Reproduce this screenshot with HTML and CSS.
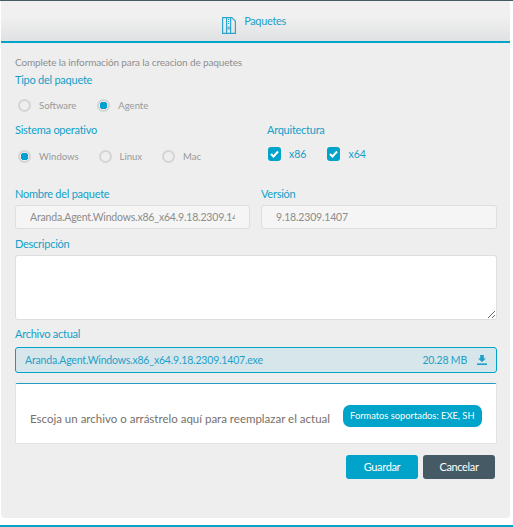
FILE: index.html
```html
<!DOCTYPE html>
<html lang="en">
<head>
  <meta charset="UTF-8" />
  <title>Paquetes</title>
  <link rel="stylesheet" href="styles.css">
</head>
<body>
  <div class="modal">
    <div class="modal-header">
      <svg class="header-icon" width="14" height="17" viewBox="0 0 14 17" fill="none" stroke="#2fa4cf" stroke-width="1.2">
        <path d="M.6.6h9.2l3.6 3.6v12.2H.6z"/>
        <path d="M4.6.6v15.8M8.6.6v15.8"/>
        <rect x="5.2" y="9.5" width="2.8" height="3.2" fill="#8fb8cc" stroke="none"/>
        <path d="M6.6 2v6" stroke-dasharray="1 1"/>
      </svg>
      <span>Paquetes</span>
    </div>

    <div class="modal-body">
      <p class="intro">Complete la información para la creacion de paquetes</p>
      <label class="field-label">Tipo del paquete</label>
      <div class="options type-options">
        <label class="radio"><span class="dot"></span>Software</label>
        <label class="radio"><span class="dot on"></span>Agente</label>
      </div>

      <div class="row-system">
        <div>
          <label class="field-label">Sistema operativo</label>
          <div class="options os-options">
            <label class="radio"><span class="dot on"></span>Windows</label>
            <label class="radio"><span class="dot"></span>Linux</label>
            <label class="radio"><span class="dot"></span>Mac</label>
          </div>
        </div>
        <div>
          <label class="field-label">Arquitectura</label>
          <div class="checks">
            <label class="check">
              <span class="box"><svg width="9" height="8" viewBox="0 0 9 8" fill="none" stroke="#fff" stroke-width="2"><path d="M1 4l2.5 2.5L8 1.5"/></svg></span>x86
            </label>
            <label class="check">
              <span class="box"><svg width="9" height="8" viewBox="0 0 9 8" fill="none" stroke="#fff" stroke-width="2"><path d="M1 4l2.5 2.5L8 1.5"/></svg></span>x64
            </label>
          </div>
        </div>
      </div>

      <div class="row-name">
        <div>
          <label class="field-label">Nombre del paquete</label>
          <input class="text-input" type="text" readonly value="Aranda.Agent.Windows.x86_x64.9.18.2309.1407" />
        </div>
        <div>
          <label class="field-label">Versión</label>
          <input class="text-input" type="text" readonly value="9.18.2309.1407" />
        </div>
      </div>

      <label class="field-label desc-label">Descripción</label>
      <textarea class="desc"></textarea>

      <label class="field-label file-label">Archivo actual</label>
      <div class="file-box">
        <span class="file-name">Aranda.Agent.Windows.x86_x64.9.18.2309.1407.exe</span>
        <span class="file-size">20.28 MB</span>
        <svg width="10" height="10" viewBox="0 0 10 10" fill="#1f9fc8">
          <path d="M3.2 0h3.6v3.4H9L5 7 1 3.4h2.2z"/>
          <rect x="0" y="8.4" width="10" height="1.6"/>
        </svg>
      </div>

      <div class="drop-box">
        <span>Escoja un archivo o arrástrelo aquí para reemplazar el actual</span>
        <span class="pill">Formatos soportados: EXE, SH</span>
      </div>

      <div class="actions">
        <button class="btn btn-save" type="button">Guardar</button>
        <button class="btn btn-cancel" type="button">Cancelar</button>
      </div>
    </div>
  </div>
  <div class="bottom-line"></div>
</body>
</html>
```

FILE: styles.css
```css
* {
  box-sizing: border-box;
}
html, body {
  height: 100%;
}
body {
  margin: 0;
  background: #fff;
  font-family: Lato, "Liberation Sans", sans-serif;
  font-size: 11px;
  color: #8c8c8c;
  border-top: 1px solid #455a64;
  display: flex;
  flex-direction: column;
  overflow: hidden;
}
.modal {
  width: 509px;
  margin-left: 1px;
  height: 517px;
  background: #eeeeee;
  border-radius: 0 0 4px 4px;
}
.modal-header {
  height: 42px;
  display: flex;
  align-items: center;
  justify-content: center;
  gap: 8px;
  padding-top: 2px;
  padding-right: 3px;
  background: linear-gradient(#f0f0f0 40%, #e0e1e3);
  border-bottom: 2px solid #00a3c9;
  color: #1f9fc8;
  font-size: 11px;
  letter-spacing: -0.35px;
}
.header-icon {
  margin-top: 7px;
}
.header-icon + span {
  margin-bottom: 3px;
}
.modal-body {
  padding: 13px 14px 0;
}
.intro {
  margin: 0;
  font-size: 10px;
  letter-spacing: -0.14px;
  line-height: 13px;
  color: #8f8f8f;
}
.field-label {
  display: block;
  color: #12a0c8;
  font-size: 11px;
  letter-spacing: -0.25px;
  line-height: 14px;
}
.intro + .field-label {
  margin-top: 4px;
}
.options {
  display: flex;
  align-items: center;
  height: 14px;
}
.type-options {
  margin-top: 11px;
  gap: 18px;
}
.os-options {
  margin-top: 12px;
  gap: 20px;
}
.radio {
  display: flex;
  align-items: center;
  gap: 8px;
  padding-left: 3px;
  font-size: 9.5px;
  color: #999;
}
.os-options .radio + .radio {
  padding-left: 0;
}
.dot {
  width: 13px;
  height: 13px;
  border: 2px solid #d4d4d4;
  border-radius: 50%;
}
.dot.on {
  background: radial-gradient(circle, #00a0d0 0 3.6px, transparent 4px);
}
.row-system {
  display: grid;
  grid-template-columns: 252px 1fr;
  margin-top: 11px;
  height: 64px;
}
.checks {
  display: flex;
  gap: 21px;
  margin-top: 10px;
  padding-left: 1px;
}
.check {
  display: flex;
  align-items: center;
  gap: 8px;
  color: #12a0c8;
  font-size: 10.5px;
}
.box {
  width: 13px;
  height: 14px;
  border-radius: 3px;
  background: #00a3c9;
  display: flex;
  align-items: center;
  justify-content: center;
}
.row-name {
  display: grid;
  grid-template-columns: 235px 236px;
  gap: 11px;
  width: 482px;
}
.row-name .field-label {
  margin-bottom: 4px;
}
.text-input {
  display: block;
  width: 100%;
  height: 24px;
  padding: 0 14px;
  border: 1px solid #dedede;
  border-radius: 3px;
  background: #f5f5f5;
  font-family: inherit;
  font-size: 10.5px;
  letter-spacing: -0.18px;
  color: #8c8c8c;
  outline: none;
}
.desc-label {
  margin-top: 8px;
}
.desc {
  display: block;
  width: 482px;
  height: 65px;
  margin-top: 4px;
  border: 1px solid #dedede;
  border-radius: 3px;
  background: #fff;
}
.file-label {
  margin-top: 7px;
}
.file-box {
  display: flex;
  align-items: center;
  width: 482px;
  height: 26px;
  margin-top: 6px;
  padding: 0 9px;
  border: 1px solid #00a3c9;
  border-radius: 3px;
  background: #d7e6eb;
  color: #1f9fc8;
  font-size: 10.5px;
  letter-spacing: -0.18px;
}
.file-name {
  flex: 1;
}
.file-size {
  margin-right: 10px;
}
.drop-box {
  display: flex;
  align-items: center;
  justify-content: space-between;
  width: 482px;
  height: 61px;
  margin-top: 10px;
  padding: 9px 14px 0 14px;
  border: 1px solid #e2e2e2;
  border-top-color: #1f9fc8;
  border-radius: 2px;
  background: #fff;
  color: #77706b;
  font-size: 11.5px;
  white-space: nowrap;
}
.pill {
  padding: 0 7.5px;
  height: 22px;
  line-height: 21px;
  margin-top: -4px;
  border-radius: 7px;
  background: #00a3c9;
  color: #fff;
  font-size: 9.3px;
  white-space: nowrap;
}
.actions {
  display: flex;
  justify-content: flex-end;
  gap: 5px;
  width: 480px;
  margin-top: 11px;
}
.btn {
  width: 72px;
  height: 24px;
  padding: 0 0 2px;
  border: none;
  border-radius: 3px;
  color: #fff;
  font-family: inherit;
  font-size: 11px;
  letter-spacing: -0.35px;
}
.btn-save {
  background: #00a3c9;
}
.btn-cancel {
  background: #455a64;
}
.bottom-line {
  height: 2px;
  margin-top: 7px;
  background: #00a3c9;
}
```
